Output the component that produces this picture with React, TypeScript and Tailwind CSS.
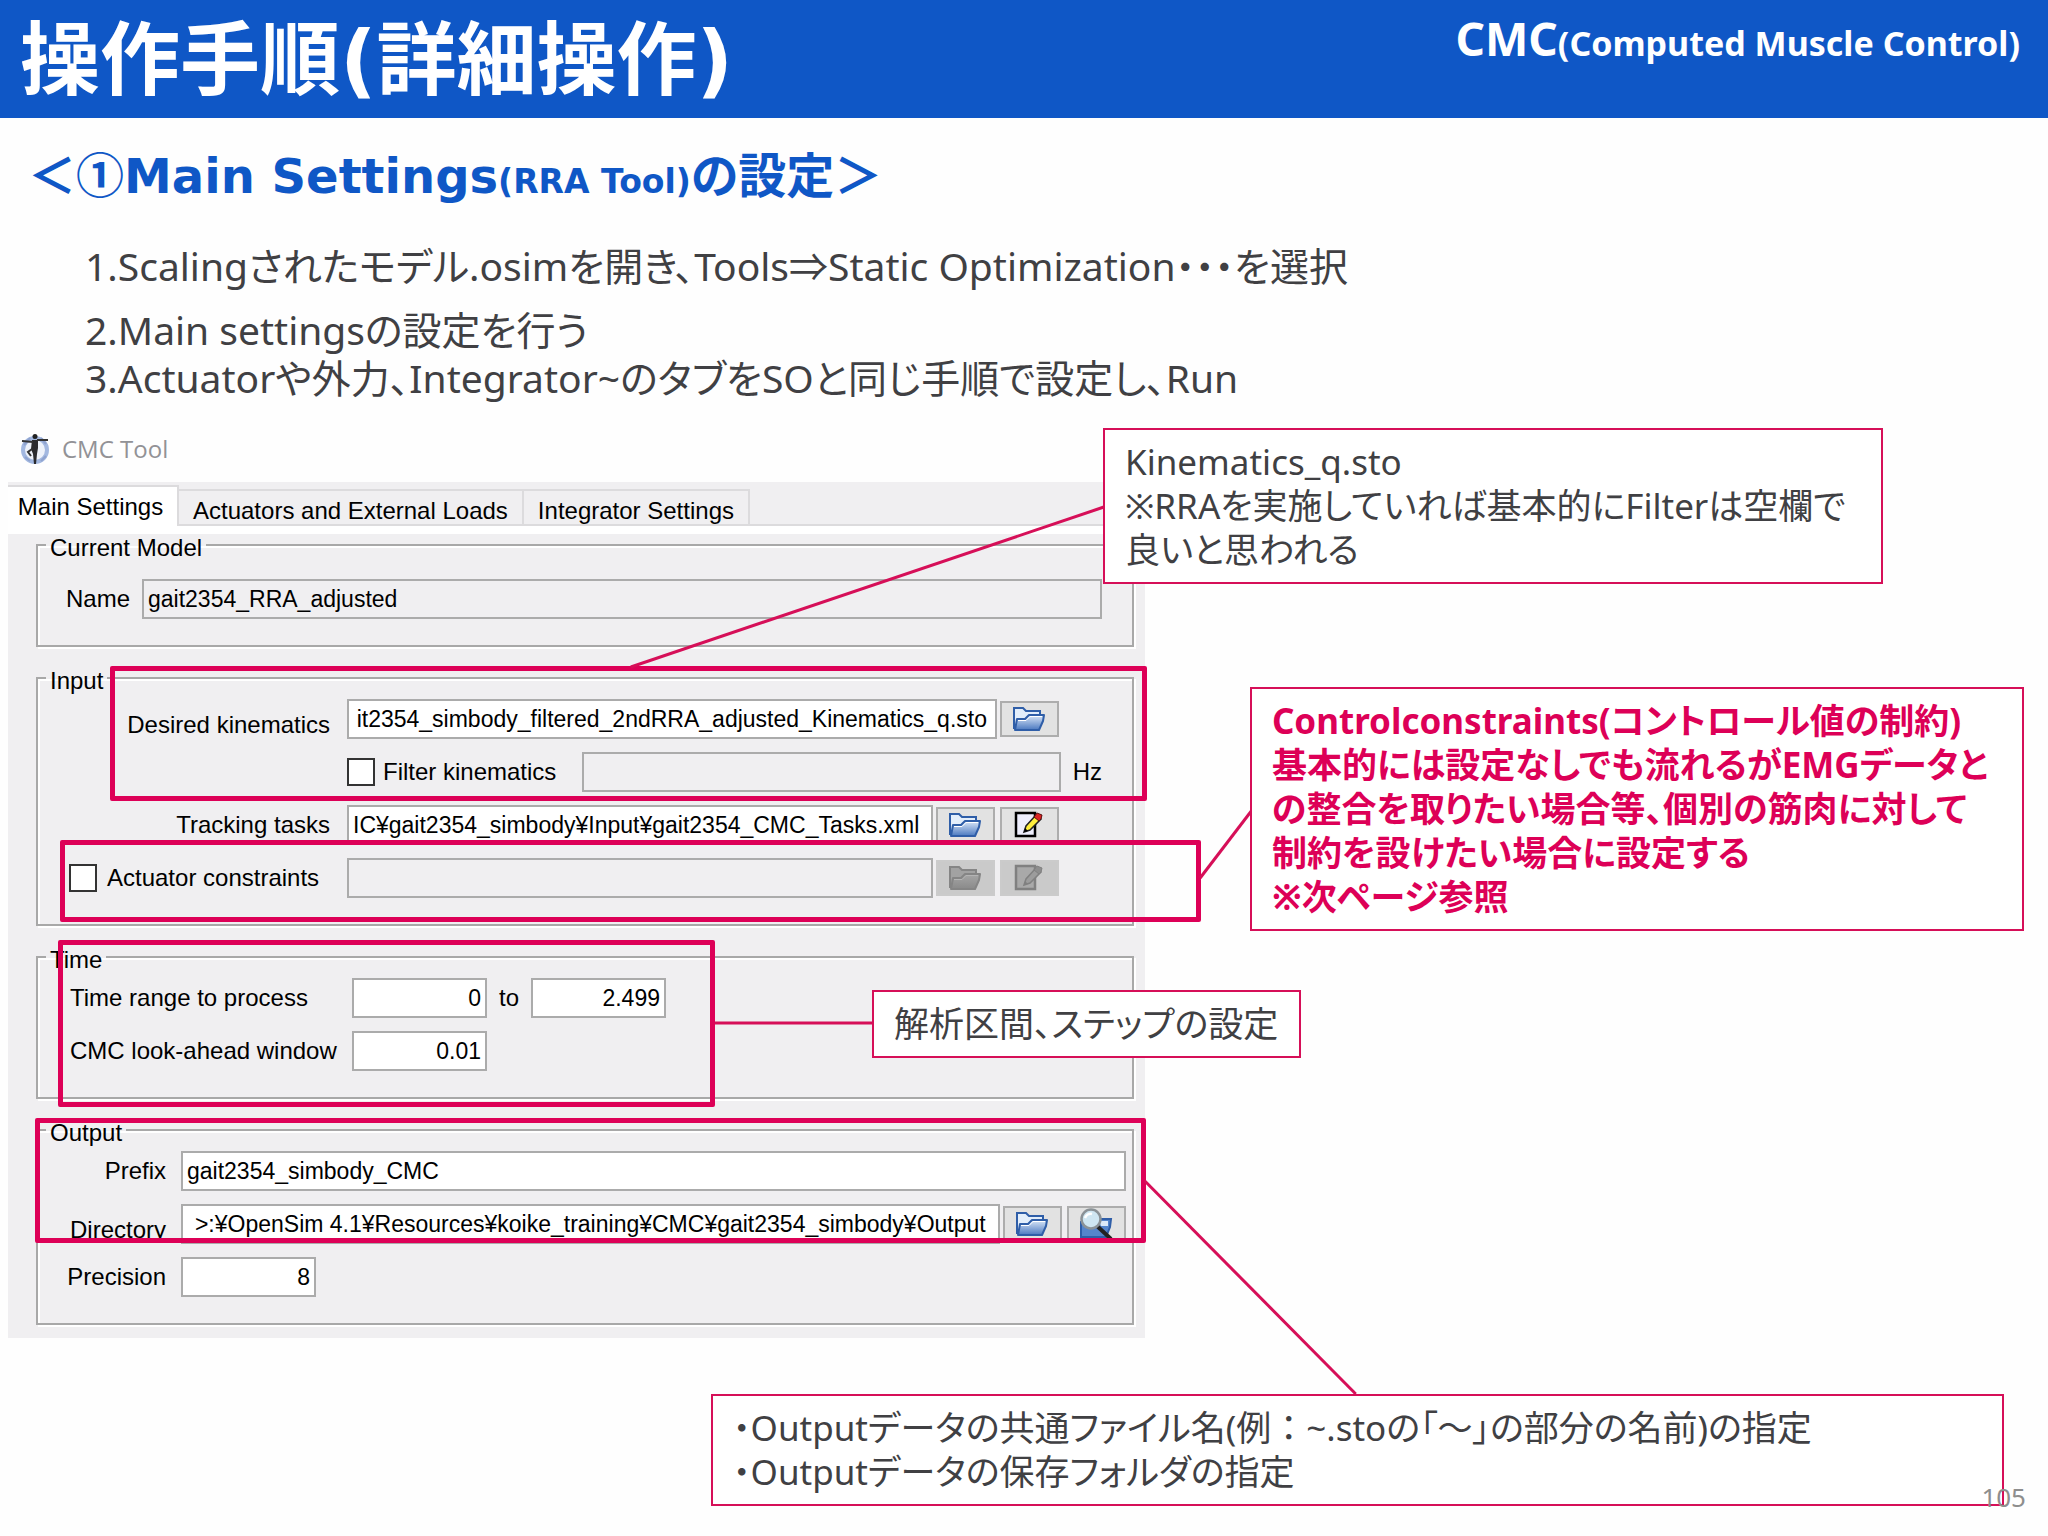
import React, { useId } from 'react';
import clsx from 'clsx';

interface FieldProps {
    id: string;
    value?: string;
    disabled?: boolean;
    className?: string;
    label?: string;
}

const TextField: React.FC<FieldProps> = ({ id, value = '', disabled, className, label }) => (
    <input
        id={id}
        type="text"
        defaultValue={value}
        readOnly={disabled}
        aria-label={label}
        className={clsx(
            'h-10 min-w-0 border-2 border-[#ababab] px-1 text-[23px] text-black outline-none',
            disabled ? 'bg-[#f0eff1]' : 'bg-white',
            className
        )}
    />
);

const CheckBox: React.FC<{ id: string }> = ({ id }) => (
    <input
        id={id}
        type="checkbox"
        className="size-7 shrink-0 appearance-none border-2 border-[#333] bg-white"
    />
);

const FolderIcon: React.FC<{ muted?: boolean }> = ({ muted }) => {
    const gradient = useId();
    return (
        <svg viewBox="0 0 32 26" className="h-[26px] w-8" aria-hidden="true">
            <defs>
                <linearGradient id={gradient} x1="0" y1="0" x2="0" y2="1">
                    <stop offset="0" stopColor={muted ? '#a6a6a6' : '#dbe8f8'} />
                    <stop offset="1" stopColor={muted ? '#8a8a8a' : '#4a78c0'} />
                </linearGradient>
            </defs>
            <path
                d="M1 23V2h9l3 3h14v5"
                fill={muted ? '#a2a2a2' : '#e3eefb'}
                stroke={muted ? '#858585' : '#2f5ea8'}
                strokeWidth="2"
            />
            <path
                d="M2 24L4 13h8l4-4h15l-1 6-4 9z"
                fill={`url(#${gradient})`}
                stroke={muted ? '#858585' : '#2f5ea8'}
                strokeWidth="2"
                strokeLinejoin="round"
            />
            <path d="M5 14.5h8l4-4h12" fill="none" stroke={muted ? '#b4b4b4' : '#fff'} strokeWidth="1" />
        </svg>
    );
};

const EditIcon: React.FC<{ muted?: boolean }> = ({ muted }) => (
    <svg viewBox="0 0 30 28" className="h-7 w-[30px]" aria-hidden="true">
        <path
            d="M2 2h19v23H2z"
            fill={muted ? '#a9a9a9' : '#eeeefc'}
            stroke={muted ? '#808080' : '#000'}
            strokeWidth="2.5"
        />
        <path d="M10 21l2-6L22 4l5 4-11 11z" fill={muted ? '#9c9c9c' : '#ffee3c'} stroke={muted ? '#808080' : '#222'} strokeWidth="1.5" />
        <path d="M20 6l3-4 5 2-1 4-2 2z" fill={muted ? '#8d8d8d' : '#d92323'} stroke={muted ? '#808080' : '#5a1010'} strokeWidth="1" />
        <path d="M10 21l1-4 3 3z" fill={muted ? '#808080' : '#000'} />
    </svg>
);

const SearchFolderIcon: React.FC = () => (
    <svg viewBox="0 0 34 32" className="h-8 w-[34px]" aria-hidden="true">
        <path d="M2 29V14h14l4-3h12l-1 8-4 10z" fill="#5585cc" stroke="#2f5ea8" strokeWidth="2" />
        <path d="M20 13h9v5h-7z" fill="#dce9f9" />
        <path d="M18 18l14 13" stroke="#222" strokeWidth="4" />
        <circle cx="12" cy="11" r="9.5" fill="#cfe6f2" stroke="#8b9297" strokeWidth="2.5" />
        <path d="M6 10c1-3 4-5 7-4" fill="none" stroke="#fff" strokeWidth="2.5" />
    </svg>
);

const AppIcon: React.FC = () => (
    <svg viewBox="0 0 30 32" className="h-8 w-[30px]" aria-hidden="true">
        <circle cx="15" cy="17" r="12" fill="#eef2fa" stroke="#a3b8e0" strokeWidth="4" />
        <path d="M4 12l6-7M26 11l-5-6M5 24l5 4M26 23l-5 5" stroke="#8fa3cf" strokeWidth="2" />
        <circle cx="15" cy="3.5" r="2.5" fill="#222" />
        <path d="M12 7h6v8l-1 6-1 10h-2l-1-10-2-5z" fill="#2b2b2e" />
        <path d="M2 8l11 1M17 7l11 0M12 16l-4 3 3 4" fill="none" stroke="#333" strokeWidth="2" />
    </svg>
);

interface IconButtonProps {
    label: string;
    muted?: boolean;
    children: React.ReactNode;
}

const IconButton: React.FC<IconButtonProps> = ({ label, muted, children }) => (
    <button
        type="button"
        aria-label={label}
        disabled={muted}
        className={clsx(
            'flex h-9 w-[59px] shrink-0 items-center justify-center border-2',
            muted ? 'border-[#cbcbcb] bg-[#cacaca]' : 'border-[#adadad] bg-[#e2e2e2]'
        )}
    >
        {children}
    </button>
);

const Group: React.FC<{ title: string; className?: string; children: React.ReactNode }> = ({
    title,
    className,
    children
}) => (
    <fieldset className="min-w-0 border-2 border-[#a8a8a8] shadow-[inset_2px_2px_0_#fff,2px_2px_0_#fff]">
        <legend className="ml-2 px-1 pt-1.5 leading-4">{title}</legend>
        <div className={clsx('flex flex-col gap-[13px] pb-[26px]', className)}>{children}</div>
    </fieldset>
);

const Highlight: React.FC<{ className: string }> = ({ className }) => (
    <div className={clsx('pointer-events-none absolute rounded-xs border-5 border-[#dd0057]', className)} />
);

const Callout: React.FC<{ className: string; children: React.ReactNode }> = ({ className, children }) => (
    <div
        className={clsx(
            'absolute border-2 border-[#d60f58] bg-white px-5 py-2.5 text-[35px] leading-[44px] whitespace-nowrap',
            className
        )}
    >
        {children}
    </div>
);

const tabs = ['Actuators and External Loads', 'Integrator Settings'];

const ToolPanel: React.FC = () => (
    <section className="relative ml-2 w-[55.5%] bg-[#f0eff1] font-['Liberation_Sans',sans-serif] text-2xl text-black">
        <div role="tablist" className="flex h-11 items-end whitespace-nowrap">
            <button type="button" role="tab" aria-selected="true" className="h-[41px] w-[171px] border-t-2 border-r-2 border-[#dcdbdd] bg-white pr-1">
                Main Settings
            </button>
            {tabs.map(tab => (
                <button
                    key={tab}
                    type="button"
                    role="tab"
                    aria-selected="false"
                    className="h-[37px] border-y-2 border-r-2 border-[#dcdbdd] px-3.5 pt-1"
                >
                    {tab}
                </button>
            ))}
            <div className="flex-1 border-b-2 border-[#dcdbdd]" />
        </div>
        <div className="h-2 bg-white" />

        <form className="flex flex-col gap-5 pr-[11px] pb-[13px] pl-7">
            <Group title="Current Model" className="pt-[23px]">
                <div className="flex items-center gap-3 pr-[30px]">
                    <label htmlFor="name" className="w-[92px] text-right">Name</label>
                    <TextField id="name" value="gait2354_RRA_adjusted" disabled className="flex-1" />
                </div>
            </Group>

            <Group title="Input" className="pt-2.5">
                <div className="flex items-center pr-[73px]">
                    <label htmlFor="kinematics" className="w-[292px] pt-3 text-right leading-7">Desired kinematics</label>
                    <TextField
                        id="kinematics"
                        value="it2354_simbody_filtered_2ndRRA_adjusted_Kinematics_q.sto"
                        className="mr-[3px] ml-[17px] flex-1 text-center"
                    />
                    <IconButton label="Browse kinematics"><FolderIcon /></IconButton>
                </div>
                <div className="flex items-center pl-[309px]">
                    <CheckBox id="filter" />
                    <label htmlFor="filter" className="ml-2 w-[199px]">Filter kinematics</label>
                    <TextField id="frequency" label="Filter frequency" disabled className="flex-1" />
                    <span className="ml-3 w-[59px]">Hz</span>
                </div>
                <div className="flex items-center pr-[73px]">
                    <label htmlFor="tasks" className="w-[292px] text-right">Tracking tasks</label>
                    <TextField
                        id="tasks"
                        value="IC¥gait2354_simbody¥Input¥gait2354_CMC_Tasks.xml"
                        className="mr-[3px] ml-[17px] flex-1"
                    />
                    <div className="flex gap-[5px]">
                        <IconButton label="Browse tasks"><FolderIcon /></IconButton>
                        <IconButton label="Edit tasks"><EditIcon /></IconButton>
                    </div>
                </div>
                <div className="flex items-center pr-[73px] pl-[31px]">
                    <CheckBox id="constraints" />
                    <label htmlFor="constraints" className="ml-2.5 w-[240px]">Actuator constraints</label>
                    <TextField id="constraints-file" label="Constraints file" disabled className="mr-[3px] flex-1" />
                    <div className="flex gap-[5px]">
                        <IconButton label="Browse constraints" muted><FolderIcon muted /></IconButton>
                        <IconButton label="Edit constraints" muted><EditIcon muted /></IconButton>
                    </div>
                </div>
            </Group>

            <Group title="Time" className="pt-2.5 pl-8">
                <div className="flex items-center">
                    <label htmlFor="start" className="w-[282px]">Time range to process</label>
                    <TextField id="start" value="0" className="w-[135px] text-right" />
                    <label htmlFor="end" className="w-11 text-center">to</label>
                    <TextField id="end" value="2.499" className="w-[135px] text-right" />
                </div>
                <div className="flex items-center">
                    <label htmlFor="window" className="w-[282px]">CMC look-ahead window</label>
                    <TextField id="window" value="0.01" className="w-[135px] text-right" />
                </div>
            </Group>

            <Group title="Output" className="pt-2.5 pr-1.5">
                <div className="flex items-center gap-[15px]">
                    <label htmlFor="prefix" className="w-32 text-right">Prefix</label>
                    <TextField id="prefix" value="gait2354_simbody_CMC" className="flex-1" />
                </div>
                <div className="flex items-center gap-[15px]">
                    <label htmlFor="directory" className="w-32 pt-3 text-right leading-7">Directory</label>
                    <div className="flex min-w-0 flex-1 items-center gap-[3px]">
                        <TextField
                            id="directory"
                            value=">:¥OpenSim 4.1¥Resources¥koike_training¥CMC¥gait2354_simbody¥Output"
                            className="flex-1 text-center"
                        />
                        <div className="flex gap-[5px]">
                            <IconButton label="Browse directory"><FolderIcon /></IconButton>
                            <IconButton label="Open directory"><SearchFolderIcon /></IconButton>
                        </div>
                    </div>
                </div>
                <div className="flex items-center gap-[15px]">
                    <label htmlFor="precision" className="w-32 text-right">Precision</label>
                    <TextField id="precision" value="8" className="w-[135px] text-right" />
                </div>
            </Group>
        </form>

        <Highlight className="top-[184px] -right-0.5 left-[102px] h-[135px]" />
        <Highlight className="top-[358px] -right-14 left-[52px] h-[82px]" />
        <Highlight className="top-[458px] left-[50px] h-[167px] w-[657px]" />
        <Highlight className="top-[636px] -right-px left-[27px] h-[125px]" />
    </section>
);

export default function App() {
    return (
        <div className="flex min-h-screen flex-col bg-[#fefefe] font-['Noto_Sans','Noto_Sans_CJK_JP',sans-serif] text-[#404043] [font-feature-settings:'palt']">
            <header className="flex h-[118px] justify-between bg-[#0f57c6] pr-7 pl-5 font-bold whitespace-nowrap text-white">
                <h1 className="pt-1 font-['DejaVu_Sans','Noto_Sans_CJK_JP',sans-serif] text-[80px] leading-[114px]">操作手順(詳細操作)</h1>
                <p className="pt-1.5 text-[46px] leading-[64px]">
                    CMC<span className="text-[34px] leading-none">(Computed Muscle Control)</span>
                </p>
            </header>

            <h2 className="mt-[26px] pl-7 font-['DejaVu_Sans','Noto_Sans_CJK_JP',sans-serif] text-5xl leading-[64px] font-bold text-[#0f57c6]">
                ＜<span className="font-['Noto_Sans_CJK_JP',sans-serif] leading-none">①</span>Main Settings
                <span className="text-[33px] leading-none">(RRA Tool)</span>の設定＞
            </h2>

            <div className="mt-[34px] pl-[85px] text-[39px] leading-[48px]">
                <p className="mb-4">1.Scalingされたモデル.osimを開き、Tools⇒Static Optimization・・・を選択</p>
                <p>2.Main settingsの設定を行う</p>
                <p>3.Actuatorや外力、Integrator~のタブをSOと同じ手順で設定し、Run</p>
            </div>

            <main className="relative min-h-[1134px] flex-1">
                <div className="flex h-20 items-center gap-3 pt-3.5 pl-5">
                    <AppIcon />
                    <span className="font-['Open_Sans',sans-serif] text-2xl text-[#929296]">CMC Tool</span>
                </div>
                <ToolPanel />

                {/* Connector lines between highlights and callouts */}
                <svg className="pointer-events-none absolute inset-0 size-full" stroke="#d60f58" strokeWidth="3" aria-hidden="true">
                    <line x1="30.8%" y1="265" x2="53.9%" y2="105" />
                    <line x1="58.6%" y1="476" x2="61.1%" y2="409" />
                    <line x1="34.9%" y1="621" x2="42.6%" y2="621" />
                    <line x1="55.9%" y1="779" x2="66.2%" y2="992" />
                </svg>

                <Callout className="top-[26px] left-[53.86%] w-[38.1%]">
                    Kinematics_q.sto<br />
                    ※RRAを実施していれば基本的にFilterは空欄で<br />
                    良いと思われる
                </Callout>
                <Callout className="top-[285px] left-[61.03%] w-[37.8%] font-bold text-[#dd0057]">
                    Controlconstraints(コントロール値の制約)<br />
                    基本的には設定なしでも流れるがEMGデータと<br />
                    の整合を取りたい場合等、個別の筋肉に対して<br />
                    制約を設けたい場合に設定する<br />
                    ※次ページ参照
                </Callout>
                <Callout className="top-[588px] left-[42.58%] w-[20.95%]">解析区間、ステップの設定</Callout>
                <Callout className="top-[992px] right-11 left-[34.72%]">
                    ・Outputデータの共通ファイル名(例
                    <span className="[font-feature-settings:normal]">：</span>
                    ~.stoの「～」の部分の名前)の指定<br />
                    ・Outputデータの保存フォルダの指定
                </Callout>
                <span className="absolute right-[22px] bottom-5 text-[26px] leading-[38px] text-[#8e8e8e]">105</span>
            </main>
        </div>
    );
}
